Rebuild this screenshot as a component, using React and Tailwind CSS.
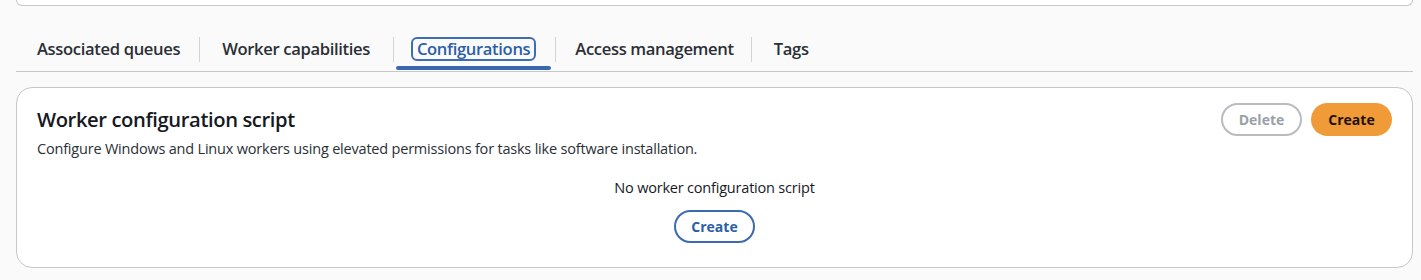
export default function App() {
  const font = { fontFamily: '"Open Sans", "Noto Sans", sans-serif' };
  const tabs = [
    { t: "Associated queues", pad: "pl-[21px] pr-[19px]" },
    { t: "Worker capabilities", pad: "pl-[22px] pr-[23px]" },
    { t: "Configurations", pad: "pl-[17px] pr-[19px]", active: true },
    { t: "Access management", pad: "pl-[19px] pr-[17px]" },
    { t: "Tags", pad: "pl-[22px] pr-[21px]" },
  ];
  return (
    <div className="w-[1421px] h-[280px] bg-[#fafafa] overflow-hidden" style={font}>
      <div className="mx-[16px] w-[1397px] h-[6px] bg-white border-x border-b border-[#c6c6cd] rounded-b-[14px]" />
      <div className="ml-[16px] w-[1397px] border-b border-[#c6c6cd] h-[66px] flex items-end">
        <div className="flex items-center h-[66px] pt-[22px]">
          {tabs.map(({ t, pad, active }, i) => (
            <div key={t} className="flex items-center h-full">
              {i > 0 && <div className="w-px h-[25px] bg-[#d1d5db]" />}
              <div className={`relative h-full flex items-center ${pad}`}>
                <span
                  className={`text-[16.6px] font-semibold tracking-[-0.35px] ${active ? "text-[#2c5ea8] border-2 border-[#3f6db3] rounded-[6px] px-[4px] leading-[20px]" : "text-[#2b2f36]"}`}
                >
                  {t}
                </span>
                {active && <div className="absolute left-[2px] right-[4px] bottom-[1px] h-[4px] rounded-full bg-[#3b67b1]" />}
              </div>
            </div>
          ))}
        </div>
      </div>
      <div className="ml-[16px] mt-[15px] w-[1397px] h-[181px] bg-white border border-[#c6c6cd] rounded-[16px] px-[20px] pt-[15px] flex flex-col">
        <div className="flex items-start justify-between">
          <div>
            <div className="text-[20.2px] font-semibold text-[#16191f] tracking-[-0.4px] leading-[32px]">Worker configuration script</div>
            <div className="text-[14.5px] text-[#2b2f36] tracking-[-0.2px] mt-[3px]">
              Configure Windows and Linux workers using elevated permissions for tasks like software installation.
            </div>
          </div>
          <div className="flex gap-[9px]">
            <button className="w-[81px] h-[33px] rounded-full border-2 border-[#b8bcc2] text-[#9aa0a6] text-[14px] font-bold">Delete</button>
            <button className="w-[81px] h-[33px] rounded-full bg-[#f09a38] text-[#1f1208] text-[14px] font-bold">Create</button>
          </div>
        </div>
        <div className="flex flex-col items-center mt-[17px]">
          <div className="text-[14.5px] text-[#16191f] tracking-[-0.2px]">No worker configuration script</div>
          <button className="mt-[11px] w-[81px] h-[33px] rounded-full border-2 border-[#3c6aae] text-[#2c5ea8] text-[14px] font-bold">Create</button>
        </div>
      </div>
    </div>
  );
}
